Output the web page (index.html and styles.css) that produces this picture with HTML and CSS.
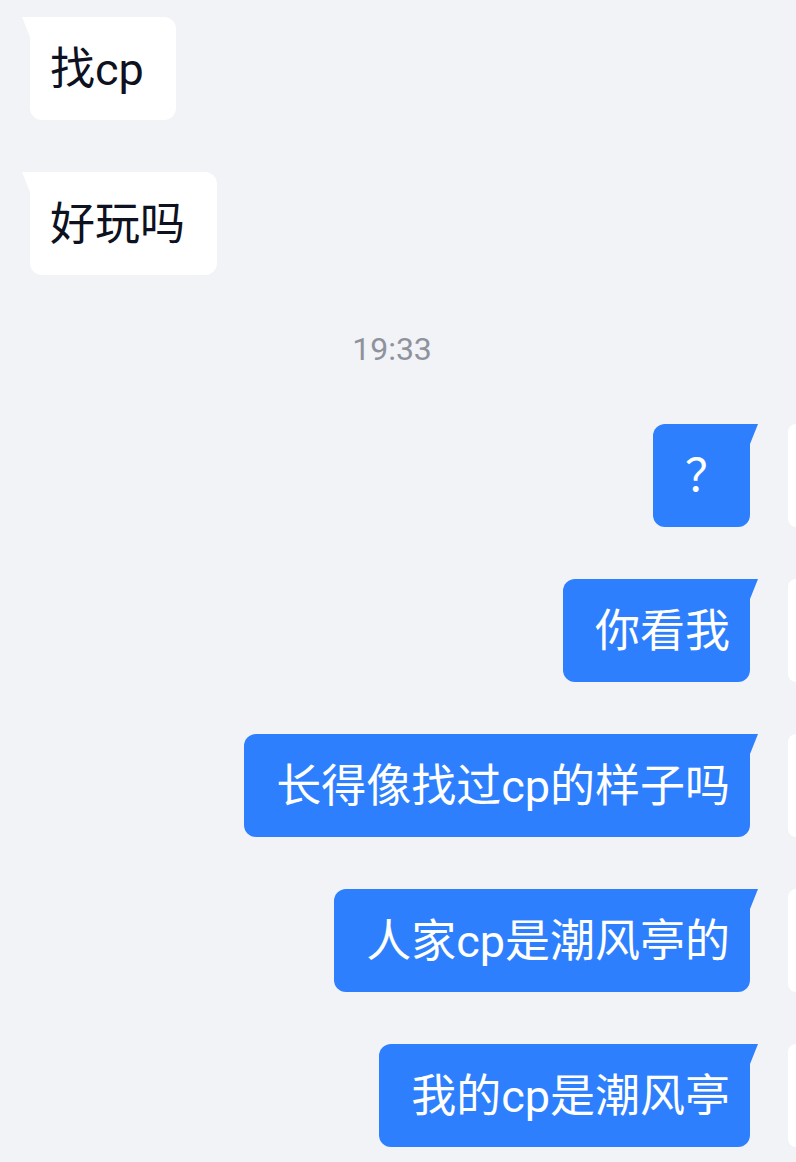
FILE: index.html
```html
<!DOCTYPE html>
<html lang="zh-CN">
  <head>
    <meta charset="UTF-8" />
    <meta name="viewport" content="width=device-width, initial-scale=1.0" />
    <title>聊天</title>
    <link rel="stylesheet" href="styles.css">
  </head>
  <body>
    <main class="chat">
      <div class="row in">
        <p class="bubble">找cp</p>
      </div>
      <div class="row in">
        <p class="bubble">好玩吗</p>
      </div>

      <p class="time">19:33</p>

      <div class="row out">
        <p class="bubble">？</p>
        <div class="avatar"></div>
      </div>
      <div class="row out">
        <p class="bubble">你看我</p>
        <div class="avatar"></div>
      </div>
      <div class="row out">
        <p class="bubble">长得像找过cp的样子吗</p>
        <div class="avatar"></div>
      </div>
      <div class="row out">
        <p class="bubble">人家cp是潮风亭的</p>
        <div class="avatar"></div>
      </div>
      <div class="row out">
        <p class="bubble">我的cp是潮风亭</p>
        <div class="avatar"></div>
      </div>
    </main>
  </body>
</html>
```

FILE: styles.css
```css
* {
  margin: 0;
  box-sizing: border-box;
}

body {
  margin: 0;
  padding: 0;
  background: #f2f3f7;
  font-family: Roboto, "Noto Sans CJK SC", sans-serif;
  overflow: hidden;
}

.chat {
  display: flex;
  flex-direction: column;
  gap: 52px;
  padding-top: 17px;
}

.row {
  display: flex;
  align-items: flex-start;
}

.row.in {
  padding-left: 30px;
}

.row.out {
  justify-content: flex-end;
  gap: 38px;
}

.bubble {
  position: relative;
  height: 103px;
  font-size: 45px;
  line-height: 105px;
  white-space: nowrap;
  border-radius: 12px;
}

.in .bubble {
  background: #fff;
  color: #0d1120;
  padding: 0 32px 0 20px;
  border-top-left-radius: 0;
}

.out .bubble {
  background: #2d7ffe;
  color: #fff;
  padding: 0 20px 0 32px;
  border-top-right-radius: 0;
}

/* little tail at the top corner */
.bubble::before {
  content: "";
  position: absolute;
  top: 0;
  width: 11px;
  height: 20px;
  background: inherit;
}

.in .bubble::before {
  left: -8px;
  clip-path: polygon(0 0, 100% 0, 100% 100%, 8px 100%);
}

.out .bubble::before {
  right: -8px;
  clip-path: polygon(0 0, 100% 0, 3px 100%, 0 100%);
}

/* avatar is cut off by the screen edge */
.avatar {
  width: 8px;
  height: 103px;
  background: #fff;
  border-radius: 10px 0 0 10px;
}

.time {
  height: 45px;
  line-height: 45px;
  text-align: center;
  font-size: 32px;
  color: #8e929c;
  padding-right: 12px;
}
```
